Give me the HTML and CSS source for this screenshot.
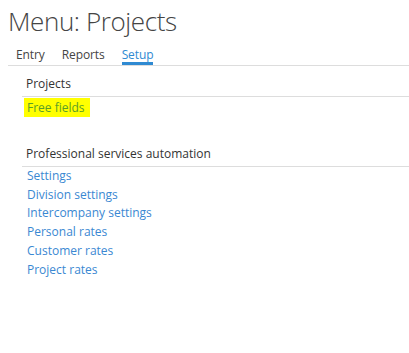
FILE: index.html
```html
<!DOCTYPE html>
<html lang="en">
<head>
    <meta charset="UTF-8">
    <title>Menu: Projects</title>
    <link rel="stylesheet" href="styles.css">
</head>
<body>

    <h1 class="page-title">Menu: Projects</h1>

    <div class="tabs">
        <a class="tab">Entry</a>
        <a class="tab">Reports</a>
        <a class="tab active">Setup</a>
    </div>

    <div class="menu">
        <div class="section">
            <h2 class="section-title">Projects</h2>
            <ul class="links">
                <li><a class="highlight">Free fields</a></li>
            </ul>
        </div>

        <div class="section">
            <h2 class="section-title">Professional services automation</h2>
            <ul class="links">
                <li><a>Settings</a></li>
                <li><a>Division settings</a></li>
                <li><a>Intercompany settings</a></li>
                <li><a>Personal rates</a></li>
                <li><a>Customer rates</a></li>
                <li><a>Project rates</a></li>
            </ul>
        </div>
    </div>

</body>
</html>
```

FILE: styles.css
```css
body {
    margin: 0;
    padding: 0 0 0 8px;
    font-family: "Open Sans", "Liberation Sans", sans-serif;
    font-size: 12px;
    color: #333;
    background: #fff;
}

.page-title {
    margin: 0;
    padding-top: 3px;
    font-size: 26px;
    font-weight: 300;
    line-height: 36px;
    letter-spacing: -0.4px;
    color: #444;
}

.tabs {
    display: flex;
    gap: 17px;
    padding: 8px 0 0 8px;
    border-bottom: 1px solid #ddd;
}

.tab {
    display: block;
    line-height: 15px;
    color: #444;
    letter-spacing: -0.1px;
    border-bottom: 3px solid transparent;
}

.tab.active {
    color: #2f8ad2;
    border-bottom-color: #2f8ad2;
}

.menu {
    padding: 9px 0 0 14px;
}

.section {
    margin-bottom: 27px;
}

.section-title {
    margin: 0;
    padding: 0 0 4px 4px;
    font-size: 12px;
    font-weight: 400;
    line-height: 17px;
    color: #333;
    border-bottom: 1px solid #ddd;
}

.links {
    list-style: none;
    margin: 0;
    padding: 0 0 0 2px;
}

.links li {
    line-height: 18.8px;
}

.links a {
    color: #3a88d2;
    padding: 0 3px;
}

.links a.highlight {
    display: inline-block;
    margin-top: 1px;
    background: #ffff00;
    color: #5a9e28;
    padding: 0 5px 0 3px;
    line-height: 19px;
}
```
